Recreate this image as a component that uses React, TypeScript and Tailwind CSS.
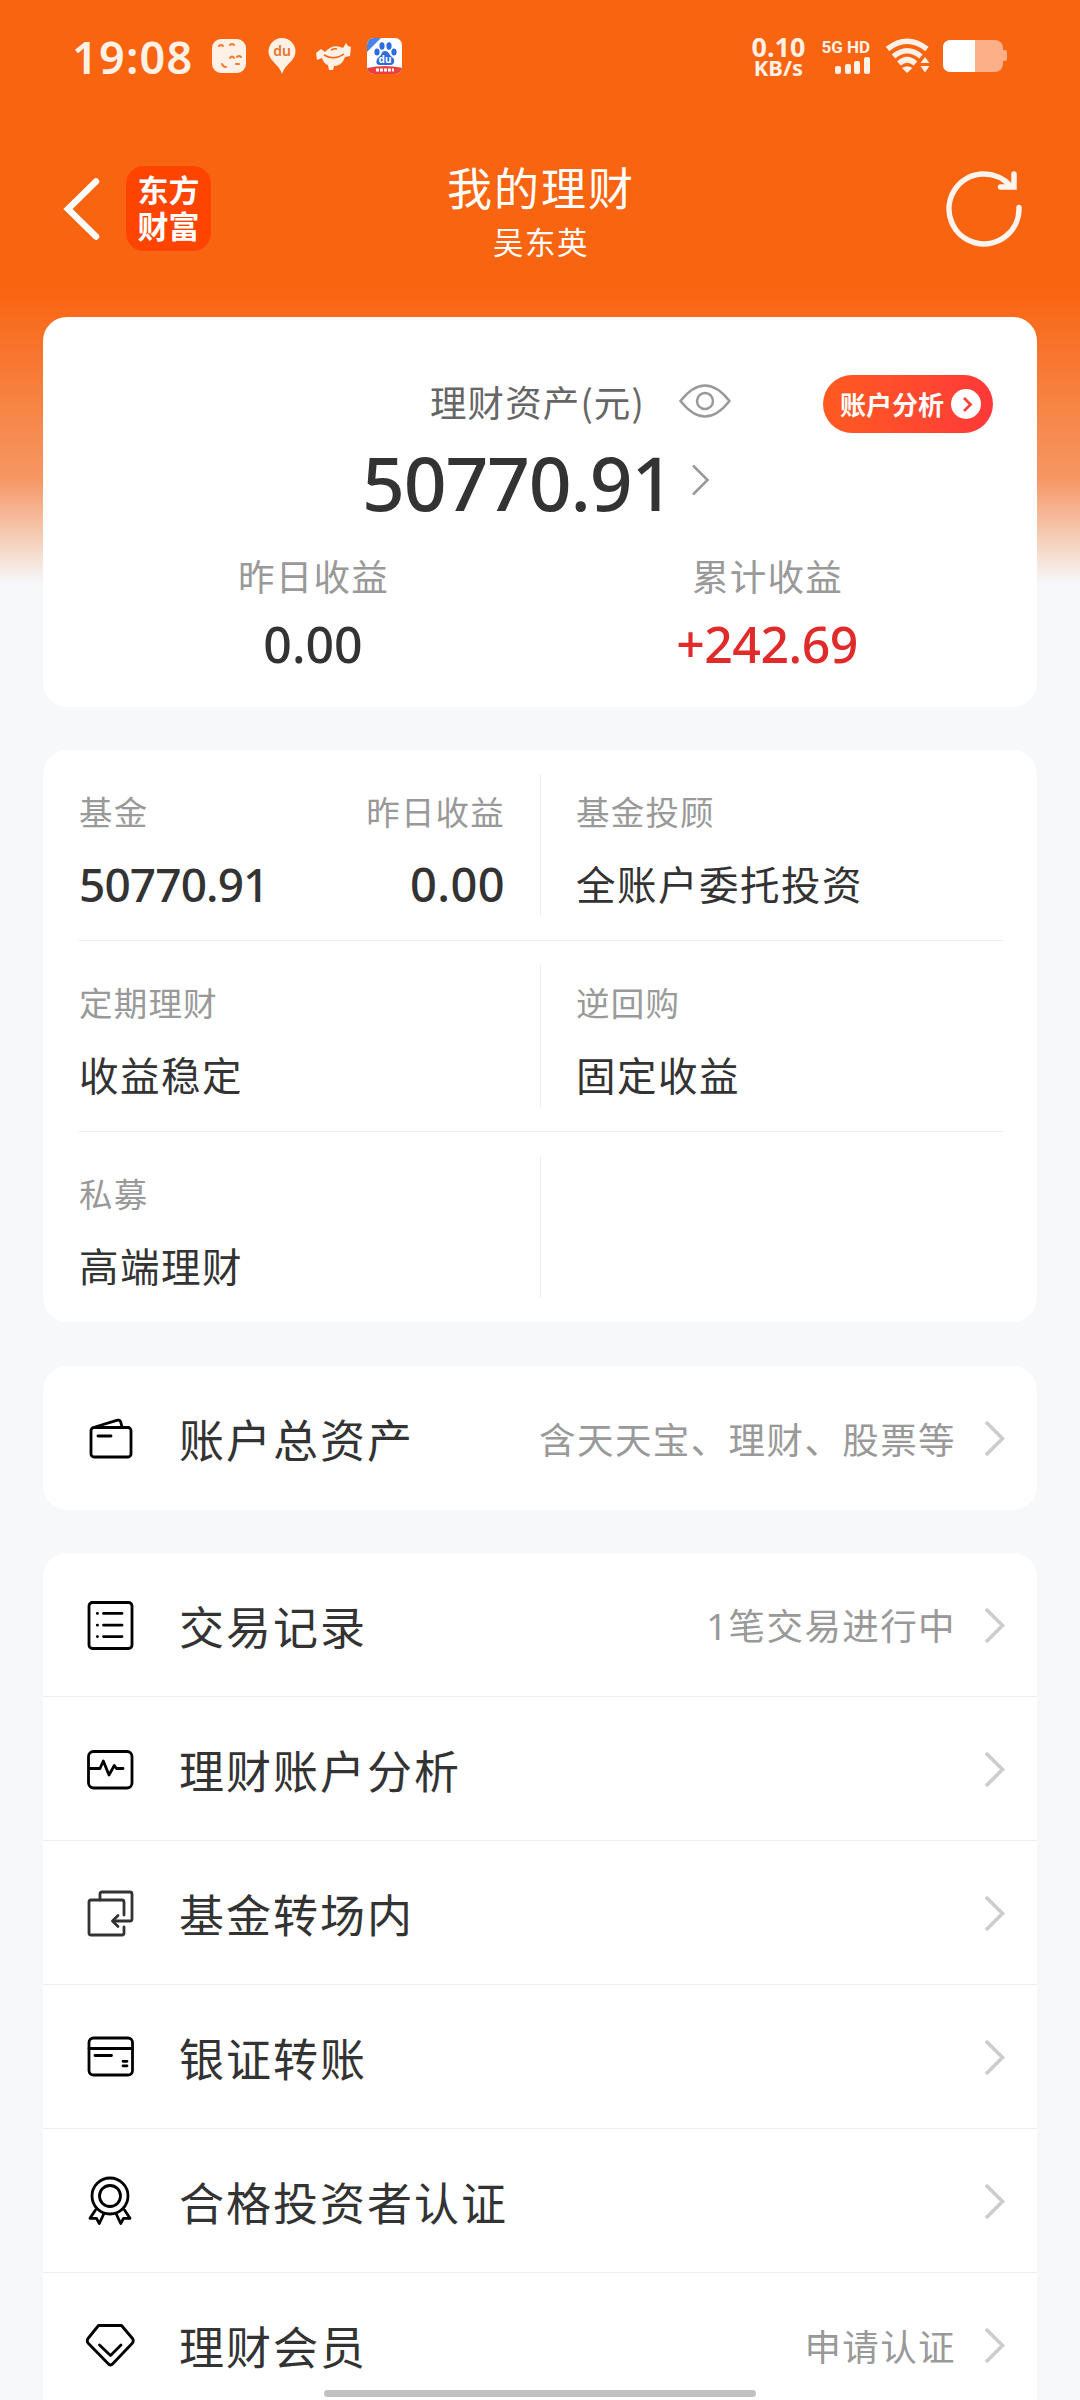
import type { ReactNode } from "react";

interface Holding {
  label: string;
  value: string;
  extraLabel?: string;
  extraValue?: string;
  numeric?: boolean;
}

interface MenuItem {
  title: string;
  note?: string;
  icon: ReactNode;
}

const holdings: Holding[][] = [
  [
    {
      label: "基金",
      value: "50770.91",
      extraLabel: "昨日收益",
      extraValue: "0.00",
      numeric: true,
    },
    { label: "基金投顾", value: "全账户委托投资" },
  ],
  [
    { label: "定期理财", value: "收益稳定" },
    { label: "逆回购", value: "固定收益" },
  ],
  [{ label: "私募", value: "高端理财" }],
];

const WalletIcon = () => (
  <>
    <rect x="9" y="17.5" width="40" height="29.5" rx="3" />
    <path d="M13 17 35.5 10.2Q38 9.6 38.7 12L40 17" />
    <path d="M16 26H29" />
  </>
);

const RecordIcon = () => (
  <>
    <rect x="7" y="5.5" width="43" height="46" rx="3.5" />
    <path d="M21.5 16.4H40M21.5 28.2H40M21.5 39.6H40" />
    <path d="M15.3 16.4h.2M15.3 28.2h.2M15.3 39.6h.2" />
  </>
);

const PulseIcon = () => (
  <>
    <rect x="6.5" y="10.5" width="43.5" height="36.5" rx="5" />
    <path d="M8 27.5H18L21.3 20 27 34 32.3 24.5 34.5 27.5H41" />
  </>
);

const TransferIcon = () => (
  <g stroke="#333" strokeWidth="2.8">
    <path d="M42 30V17Q42 15 40 15H9Q7 15 7 17V48Q7 50 9 50H40Q42 50 42 48V42" />
    <path d="M18 15V9Q18 7 20 7H48Q50 7 50 9V34Q50 36 48 36H31" />
    <path d="M36 30.5 30.5 36 36 41.5" />
  </g>
);

const BankCardIcon = () => (
  <>
    <rect x="7" y="9" width="43.5" height="37" rx="4.5" />
    <path d="M7 19.5H50M13 26.5H29.5M41 32.3H45M41 36.8H45" />
  </>
);

const MedalIcon = () => (
  <>
    <circle cx="28" cy="23" r="18" />
    <circle cx="28" cy="23" r="10.5" />
    <path d="M13.5 37 8 45.3H14.5L17.3 50.5 22 40.5" />
    <path d="M42.5 37 48 45.3H41.5L38.7 50.5 34 40.5" />
  </>
);

const DiamondIcon = () => (
  <>
    <path d="M16.5 8.5H39.5L50.5 21.5Q52 24 50.5 26L31 46.5Q28.5 49.5 26 46.5L6 26Q4.5 24 6 21.5Z" />
    <path d="M17.5 28 28.5 38.5 39 28" />
  </>
);

const menuItems: MenuItem[] = [
  { title: "交易记录", note: "1笔交易进行中", icon: <RecordIcon /> },
  { title: "理财账户分析", icon: <PulseIcon /> },
  { title: "基金转场内", icon: <TransferIcon /> },
  { title: "银证转账", icon: <BankCardIcon /> },
  { title: "合格投资者认证", icon: <MedalIcon /> },
  { title: "理财会员", note: "申请认证", icon: <DiamondIcon /> },
];

const StatusBar = () => (
  <div className="flex h-[112px] items-center px-[72px] text-[#fff1e6]">
    <span className="w-[140px] font-['Noto_Sans'] text-[45px] font-semibold leading-none tracking-[1.2px]">
      19:08
    </span>
    {/* notification icons */}
    <svg width="35" height="36" viewBox="0 0 35 36">
      <rect width="34" height="34" y="1" rx="9" fill="#fff1e6" />
      <g fill="none" stroke="#f9772b" strokeWidth="2" strokeLinecap="round">
        <path d="M7 8q2-2 4 0M18 7q2-2 4 0M18 20q2-3 4 0M25 19q2-2 4 0M10 26q1 3 4 3M24 26h3" />
      </g>
    </svg>
    <svg className="ml-[20px]" width="30" height="38" viewBox="0 0 30 38">
      <path
        d="M15 37C12 27 1.5 24 1.5 14.5A13.5 13.5 0 0 1 28.5 14.5C28.5 24 18 27 15 37Z"
        fill="#fff1e6"
      />
      <text
        x="15"
        y="19"
        textAnchor="middle"
        fontSize="14"
        fontWeight="600"
        fontFamily="Noto Sans, sans-serif"
        fill="#e8722c"
      >
        du
      </text>
    </svg>
    <svg className="ml-[18px]" width="37" height="30" viewBox="0 0 37 30">
      <path
        d="M1 12 6 8l4 3q8-9 18-4l3-5 2 3 3 1-1 9-5 1q-3 9-11 9l-1 4h-4l-1-5q-4-1-6-7l-5 2Z"
        fill="#fff1e6"
      />
      <path
        d="M9 14q10 6 20-1M16 9q4-2 6-1"
        fill="none"
        stroke="#f9650f"
        strokeWidth="1.5"
      />
    </svg>
    <svg className="ml-[15px]" width="36" height="36" viewBox="0 0 36 36">
      <clipPath id="appTile">
        <rect width="35" height="36" rx="7" />
      </clipPath>
      <g clipPath="url(#appTile)">
        <rect width="36" height="36" fill="#fff" />
        <path d="M0 0H14L0 14Z" fill="#4b83ea" />
        <path d="M0 30Q18 26 36 30V36H0Z" fill="#ea4040" />
        <g fill="#2d6be0">
          <ellipse cx="10" cy="14" rx="2.6" ry="3.5" />
          <ellipse cx="15" cy="8" rx="2.6" ry="3.7" />
          <ellipse cx="22" cy="8" rx="2.6" ry="3.7" />
          <ellipse cx="27" cy="14" rx="2.6" ry="3.5" />
          <path d="M18 13Q21 13 23 17L27 21Q28 27 23 27H13Q8 27 10 21L14 17Q15 13 18 13Z" />
        </g>
        <text
          x="18"
          y="25"
          textAnchor="middle"
          fontSize="10"
          fontWeight="700"
          fontFamily="Noto Sans, sans-serif"
          fill="#fff"
        >
          du
        </text>
        <path d="M9 32h18" stroke="#fff" strokeWidth="3" strokeDasharray="3 1" />
      </g>
    </svg>

    {/* network and battery */}
    <div className="ml-auto flex items-center">
      <div className="flex flex-col items-center font-['Noto_Sans'] font-bold">
        <span className="text-[27px] leading-[21px]">0.10</span>
        <span className="text-[22px] leading-[20px]">KB/s</span>
      </div>
      <div className="ml-[16px] flex flex-col items-end">
        <span className="whitespace-nowrap font-['Roboto'] text-[17px] font-bold leading-[16px]">
          5G HD
        </span>
        <svg className="mt-[2px]" width="35" height="17" viewBox="0 0 35 17">
          <g fill="#fff1e6">
            <rect x="0" y="9" width="6" height="8" rx="2" />
            <rect x="10" y="7" width="6" height="10" rx="2" />
            <rect x="19" y="4" width="6" height="13" rx="2" />
            <rect x="29" y="0" width="6" height="17" rx="2" />
          </g>
        </svg>
      </div>
      <svg className="ml-[15px]" width="46" height="36" viewBox="0 0 46 36">
        <g fill="none" stroke="#fff1e6" strokeWidth="5.5">
          <path d="M2.5 11Q22 -4.5 42 11" />
          <path d="M8.5 18.5Q22 7 36 18.5" />
          <path d="M14 25.5Q22 18 30.5 25.5" />
        </g>
        <path d="M22 35 17 30Q22 26.5 27.5 30Z" fill="#fff1e6" />
        <path d="M35.5 25 40 19l4.5 6ZM35.5 28H44.5L40 34.5Z" fill="#fff1e6" />
      </svg>
      <svg className="ml-[11px]" width="66" height="34" viewBox="0 0 66 34">
        <rect x="1" y="1" width="60" height="32" rx="8" fill="#fdb088" />
        <path d="M61 11h2q2 0 2 2v7q0 2-2 2h-2Z" fill="#fdb088" />
        <path d="M33 1H9Q1 1 1 9V25Q1 33 9 33H33Z" fill="#fff" />
      </svg>
    </div>
  </div>
);

const Header = () => (
  <div className="grid h-[205px] grid-cols-3 items-start px-[60px] pt-[48px]">
    <div className="flex items-center pt-[6px]">
      <svg width="42" height="70" viewBox="0 0 42 70" fill="none">
        <path
          d="M36 7.5 8 35 36 62.5"
          stroke="#fff"
          strokeWidth="6.5"
          strokeLinecap="round"
        />
      </svg>
      <div className="ml-[24px] flex h-[85px] w-[85px] items-center justify-center rounded-[18px] bg-[#ff4400] pb-[3px] text-center text-[31px] font-bold leading-[36px] text-white">
        东方
        <br />
        财富
      </div>
    </div>
    <div className="flex flex-col items-center text-white">
      <h1 className="ml-[2px] text-[45px] leading-[54px] tracking-[2px]">
        我的理财
      </h1>
      <p className="ml-[2px] mt-[7px] text-[30.5px] leading-[40px] tracking-[1.5px]">
        吴东英
      </p>
    </div>
    <svg
      className="ml-auto mt-[6px]"
      width="80"
      height="80"
      viewBox="0 0 80 80"
      fill="none"
      stroke="#fff5ee"
      strokeWidth="5.5"
      strokeLinecap="round"
      overflow="visible"
    >
      <path d="M79 41.500A35 35 0 1 1 70.500 20" />
      <path d="M74 8V21H60.500" />
    </svg>
  </div>
);

const Chevron = () => (
  <svg
    className="ml-[27px] shrink-0"
    width="24"
    height="40"
    viewBox="0 0 24 40"
    fill="none"
  >
    <path d="M3 4 19.5 20.5 3 37" stroke="#ccc" strokeWidth="3.6" />
  </svg>
);

const AssetCard = () => (
  <section className="relative h-[390px] rounded-[24px] bg-white pt-[60px] text-[#333]">
    <div className="flex h-[50px] items-center pl-[387px]">
      <span className="w-[214px] whitespace-nowrap text-[36.5px] tracking-[1.1px] text-[#666]">
        理财资产(元)
      </span>
      <svg
        className="-mt-[2px] ml-[35px]"
        width="52"
        height="36"
        viewBox="0 0 52 36"
        fill="none"
        stroke="#999"
        strokeWidth="2.5"
      >
        <path d="M1.5 18Q26 -13 50.5 18Q26 49 1.5 18Z" />
        <circle cx="26" cy="18" r="8" />
      </svg>
    </div>
    <button
      type="button"
      className="absolute right-[44px] top-[58px] flex h-[58px] w-[170px] items-center rounded-full bg-linear-to-r from-[#ff5a1f] to-[#ff3838] pb-px pl-[17px] text-[26px] font-bold text-white"
    >
      账户分析
      <svg className="ml-[7px]" width="30" height="30" viewBox="0 0 30 30">
        <circle cx="15" cy="15" r="15" fill="#fff" />
        <path
          d="M13 9 19.5 15.5 13 22"
          fill="none"
          stroke="#f0443c"
          strokeWidth="2.8"
        />
      </svg>
    </button>
    <div className="flex h-[98px] items-center pl-[319px] pt-[8px]">
      <span className="w-[307px] pt-[5px] font-['Noto_Sans'] text-[75px] font-medium leading-none tracking-[-1.2px]">
        50770.91
      </span>
      <svg
        className="ml-[22px]"
        width="20"
        height="34"
        viewBox="0 0 20 34"
        fill="none"
      >
        <path d="M2 2.5 16.5 17 2 31.5" stroke="#999" strokeWidth="2.6" />
      </svg>
    </div>
    <div className="mt-[24px] grid grid-cols-2 px-[43px] text-center">
      <div>
        <p className="ml-px text-[36.5px] leading-[54px] tracking-[1.3px] text-[#999]">
          昨日收益
        </p>
        <p className="mt-[9px] font-['Noto_Sans'] text-[50px] font-medium leading-[64px]">
          0.00
        </p>
      </div>
      <div>
        <p className="ml-px text-[36.5px] leading-[54px] tracking-[1.3px] text-[#999]">
          累计收益
        </p>
        <p className="mt-[9px] font-['Noto_Sans'] text-[50px] font-medium leading-[64px] tracking-[-0.5px] text-[#e02b2b]">
          +242.69
        </p>
      </div>
    </div>
  </section>
);

const HoldingCell = ({ item }: { item?: Holding }) => (
  <div className="flex justify-between pl-[35px] pr-[35px] pt-[37px] first:pl-[36px]">
    {item && (
      <div>
        <p className="text-[33.5px] leading-[48px] tracking-[1.2px] text-[#999]">
          {item.label}
        </p>
        {item.numeric ? (
          <p className="mt-[22px] font-['Noto_Sans'] text-[46px] font-medium leading-[54px] tracking-[-0.9px] text-[#333]">
            {item.value}
          </p>
        ) : (
          <p className="mt-[21px] text-[39.5px] leading-[54px] tracking-[1.5px] text-[#333]">
            {item.value}
          </p>
        )}
      </div>
    )}
    {item?.extraLabel && (
      <div className="text-right">
        <p className="text-[33.5px] leading-[48px] tracking-[1.2px] text-[#999]">
          {item.extraLabel}
        </p>
        <p className="mt-[22px] font-['Noto_Sans'] text-[47px] font-medium leading-[54px] tracking-[0.4px] text-[#333]">
          {item.extraValue}
        </p>
      </div>
    )}
  </div>
);

const HoldingsCard = () => (
  <section className="mt-[43px] rounded-[24px] bg-white">
    {holdings.map((row, i) => (
      <div key={i}>
        {i > 0 && <div className="ml-[36px] mr-[34px] h-px bg-[#eee]" />}
        <div className="grid h-[190px] grid-cols-[497px_1px_496px]">
          <HoldingCell item={row[0]} />
          <div className="my-[24px] bg-[#eee]" />
          <HoldingCell item={row[1]} />
        </div>
      </div>
    ))}
  </section>
);

const MenuRow = ({ title, note, icon }: MenuItem) => (
  <div className="flex h-[144px] items-center pl-[39px] pr-[30px]">
    <svg
      className="shrink-0"
      width="56"
      height="56"
      viewBox="0 0 56 56"
      fill="none"
      stroke="#000"
      strokeWidth="2.8"
      strokeLinecap="round"
      strokeLinejoin="round"
    >
      {icon}
    </svg>
    <span className="ml-[41px] pt-px text-[45px] leading-none tracking-[2px] text-[#333]">
      {title}
    </span>
    <span className="ml-auto pt-[4px] font-['Noto_Sans','Noto_Sans_CJK_SC',sans-serif] text-[36.5px] leading-none tracking-[1.4px] text-[#999]">
      {note}
    </span>
    <Chevron />
  </div>
);

export default function App() {
  return (
    <div className="relative h-[2400px] w-[1080px] overflow-hidden bg-[#f6f8fa] bg-[linear-gradient(#f96410_0px,#f96410_288px,#f69765_480px,#f6f8fa_584px)] font-['Noto_Sans_CJK_SC',sans-serif]">
      <StatusBar />
      <Header />
      <main className="px-[43px]">
        <AssetCard />
        <HoldingsCard />
        <section className="mt-[44px] rounded-[24px] bg-white">
          <MenuRow
            title="账户总资产"
            note="含天天宝、理财、股票等"
            icon={<WalletIcon />}
          />
        </section>
        <section className="mt-[43px] divide-y divide-[#eee] rounded-t-[24px] bg-white">
          {menuItems.map((item) => (
            <MenuRow key={item.title} {...item} />
          ))}
        </section>
      </main>
      {/* home indicator */}
      <div className="absolute bottom-[3px] left-[324px] h-[7px] w-[432px] rounded-full bg-[#c1c1c1]" />
    </div>
  );
}
